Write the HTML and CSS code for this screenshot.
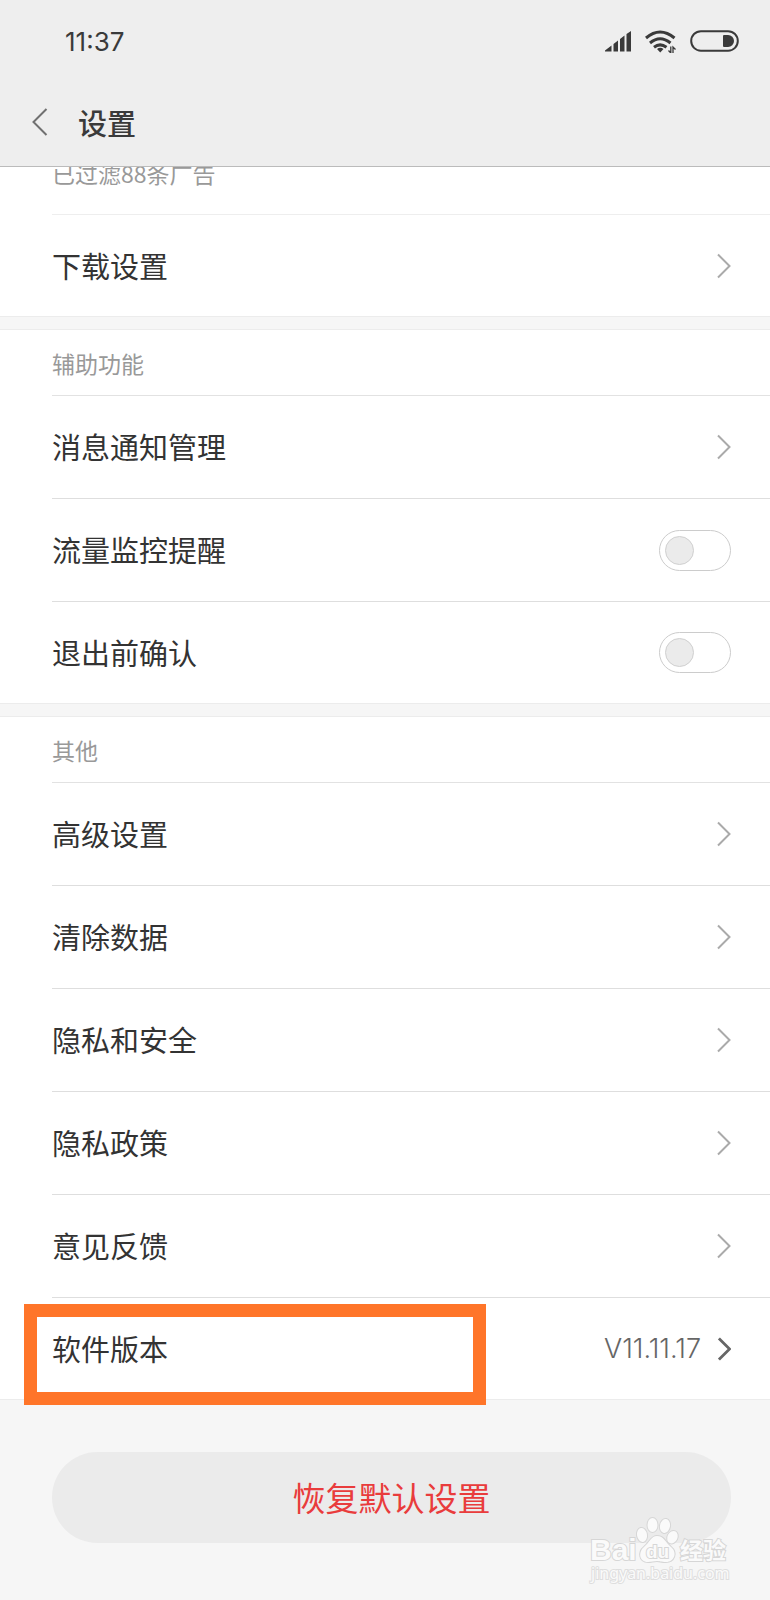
FILE: index.html
```html
<!DOCTYPE html>
<html lang="zh-CN">
<head>
<meta charset="utf-8">
<meta name="viewport" content="width=device-width, initial-scale=1">
<title>设置</title>
<link rel="stylesheet" href="styles.css">
</head>
<body>
<svg class="defs" aria-hidden="true">
  <symbol id="chevron" viewBox="0 0 14 26"><path d="M1 1.500 12.500 13 1 24.500" fill="none" stroke="currentColor"/></symbol>
</svg>
<header class="header">
  <div class="status">
    <time class="clock">11:37</time>
    <div class="status-icons">
      <svg class="signal" viewBox="0 0 27 21" aria-hidden="true" fill="currentColor">
        <path d="M0 20.500V19.500L6.500 14.500V20.500ZM8.500 20.500V13L13 9.500V20.500ZM15 20.500V8L19.500 4.500V20.500ZM21.500 20.500V3L26 0V20.500Z"/>
      </svg>
      <svg class="wifi" viewBox="0 0 32 23" aria-hidden="true">
        <g fill="none" stroke="currentColor" stroke-width="3">
          <path d="M1 8Q15 -4 29.500 8"/>
          <path d="M5 13Q15 4.500 25.500 13"/>
          <path d="M9 17.200Q15 12.500 21.500 17.200"/>
        </g>
        <path d="M12 19Q15.200 16.500 18.500 19L15.200 22.500Z" fill="currentColor"/>
        <path d="M25.800 16.500V23L23.500 20.500M28 23.500V17L30.500 19.500" fill="none" stroke="currentColor" stroke-width="1.300"/>
      </svg>
      <svg class="battery" viewBox="0 0 49 22" aria-hidden="true">
        <rect x="1.200" y="1.200" width="46.600" height="19.500" rx="9.700" fill="none" stroke="currentColor" stroke-width="2"/>
        <path d="M34 5H38A6 6 0 0 1 38 17H34Q33 17 33 16V6Q33 5 34 5Z" fill="currentColor"/>
      </svg>
    </div>
  </div>
  <div class="titlebar">
    <button class="back" type="button" aria-label="返回">
      <svg viewBox="0 0 16 28" aria-hidden="true"><path d="M14.500 1 1.500 14 14.500 27" fill="none" stroke="currentColor" stroke-width="2"/></svg>
    </button>
    <h1 class="title">设置</h1>
  </div>
</header>
<main>
  <section class="group">
    <p class="filtered">已过滤88条广告</p>
    <a class="row" href="#"><span class="label">下载设置</span><svg class="chevron"><use href="#chevron"/></svg></a>
  </section>
  <section class="group">
    <h2 class="group-title">辅助功能</h2>
    <a class="row" href="#"><span class="label">消息通知管理</span><svg class="chevron"><use href="#chevron"/></svg></a>
    <label class="row"><span class="label">流量监控提醒</span><input class="toggle" type="checkbox" role="switch"></label>
    <label class="row"><span class="label">退出前确认</span><input class="toggle" type="checkbox" role="switch"></label>
  </section>
  <section class="group">
    <h2 class="group-title">其他</h2>
    <a class="row" href="#"><span class="label">高级设置</span><svg class="chevron"><use href="#chevron"/></svg></a>
    <a class="row" href="#"><span class="label">清除数据</span><svg class="chevron"><use href="#chevron"/></svg></a>
    <a class="row" href="#"><span class="label">隐私和安全</span><svg class="chevron"><use href="#chevron"/></svg></a>
    <a class="row" href="#"><span class="label">隐私政策</span><svg class="chevron"><use href="#chevron"/></svg></a>
    <a class="row" href="#"><span class="label">意见反馈</span><svg class="chevron"><use href="#chevron"/></svg></a>
    <a class="row highlighted" href="#"><span class="label">软件版本</span><span class="version">V11.11.17</span><svg class="chevron dark"><use href="#chevron"/></svg></a>
  </section>
</main>
<footer class="footer">
  <button class="reset" type="button">恢复默认设置</button>
  <svg class="watermark" viewBox="0 0 150 76" role="img" aria-label="Baidu 经验">
    <g class="mark">
      <text class="brand" x="5" y="46">Bai</text>
      <ellipse cx="57" cy="21" rx="5" ry="7" transform="rotate(-10 57 21)"/>
      <ellipse cx="67.500" cy="11" rx="5" ry="7"/>
      <ellipse cx="80" cy="12" rx="5" ry="7" transform="rotate(10 80 12)"/>
      <ellipse cx="87.500" cy="23" rx="5" ry="6.500" transform="rotate(25 87 23)"/>
      <path d="M72 22C79 22 80 28 86 33C93 39 89 48 81 48C76 48 75 47 72 47C68 47 67 48 63 48C54 48 53 38 59 33C65 28 66 22 72 22Z"/>
      <text class="du" x="61" y="44">du</text>
      <text class="cn" x="95" y="45">经验</text>
      <text class="site" x="6" y="65">jingyan.baidu.com</text>
    </g>
  </svg>
</footer>
</body>
</html>
```
FILE: styles.css
```css
*, *::before, *::after { box-sizing: border-box; }

body {
  margin: 0;
  min-height: 100vh;
  display: flex;
  flex-direction: column;
  background: #f6f6f6;
  color: #3a3a3a;
  font-family: "Noto Sans CJK SC", sans-serif;
}

.defs { display: none; }

/* The list scrolls underneath the header. */
.header {
  position: sticky;
  top: 0;
  z-index: 1;
  background: #eee;
  border-bottom: 1px solid #bbb;
}

.status {
  display: flex;
  justify-content: space-between;
  align-items: center;
  height: 84px;
  padding: 0 31px 0 65px;
}

.clock { font: 400 26px/32px Inter, sans-serif; }
.status-icons { display: flex; align-items: center; gap: 13px; padding-bottom: 2px; }
.signal { width: 27px; height: 21px; }
.wifi { width: 32px; height: 23px; }
.battery { width: 49px; height: 22px; }

.titlebar {
  display: flex;
  align-items: center;
  gap: 30px;
  height: 82px;
  padding: 0 32px 6px;
}

.back {
  display: flex;
  padding: 0;
  border: 0;
  background: none;
  color: #707070;
}
.back svg { width: 16px; height: 28px; }

.title { margin: 0; font-size: 29px; line-height: 40px; font-weight: 500; }

.group {
  background: #fff;
  box-shadow: 0 0 0 1px #ececec;
}
.group + .group { margin-top: 14px; }

.filtered,
.group-title {
  margin: 0 0 0 52px;
  border-bottom: 1px solid #e2e2e2;
  color: #999;
  font-size: 23px;
  font-weight: 400;
}
.filtered { height: 48px; line-height: 12px; border-color: #eee; }
.group-title { padding: 16px 0 15px; line-height: 34px; }

.row {
  position: relative;
  display: flex;
  align-items: center;
  gap: 17px;
  min-height: 103px;
  margin-left: 52px;
  padding-right: 39px;
  border-bottom: 1px solid #dedede;
  color: #333;
  font-size: 29px;
  line-height: 42px;
  text-decoration: none;
}
.row:last-child { min-height: 101px; border-bottom: 0; }

.label { flex: 1; padding-bottom: 2px; }

.chevron { width: 14px; height: 26px; color: #aaa; stroke-width: 2; }
.chevron.dark { width: 13px; height: 24px; color: #666; stroke-width: 3; }

.version { color: #666; font: 300 27px/32px Inter, sans-serif; }

.toggle {
  appearance: none;
  width: 72px;
  height: 41px;
  margin: 0;
  padding: 5px;
  border: 1px solid #ccc;
  border-radius: 21px;
  background: #fff;
}
.toggle::before {
  content: "";
  display: block;
  width: 29px;
  height: 29px;
  border: 1px solid #d0d0d0;
  border-radius: 50%;
  background: #ebebeb;
}
.toggle:checked::before { margin-left: auto; }

.highlighted::after {
  content: "";
  position: absolute;
  top: 6px;
  bottom: -6px;
  left: -28px;
  width: 60vw;
  border: 13px solid #ff7529;
}

.footer {
  position: relative;
  flex: 1;
  padding: 53px 39px 56px 52px;
}

.reset {
  display: block;
  width: 100%;
  height: 91px;
  padding: 0 0 2px;
  border: 0;
  border-radius: 46px;
  background: #ebebeb;
  color: #e93c3c;
  font: 400 33px/48px "Noto Sans CJK SC", sans-serif;
}

.watermark {
  position: absolute;
  right: 35px;
  bottom: 10px;
  width: 150px;
  height: 76px;
}
.mark { fill: #fafafa; stroke: #d6d6d6; stroke-width: 2; paint-order: stroke; }
.brand { font: 700 30px "Liberation Sans", sans-serif; }
.du { font: 700 19px "Liberation Sans", sans-serif; }
.cn { font: 700 23px "Noto Sans CJK SC", sans-serif; }
.site { font: 400 16px "Noto Sans", sans-serif; stroke: #dedede; }
```
